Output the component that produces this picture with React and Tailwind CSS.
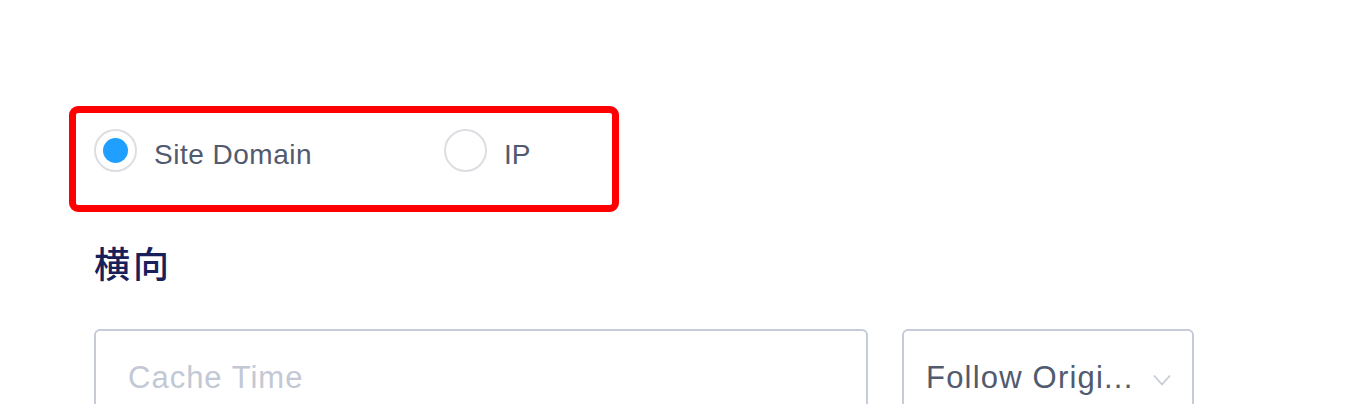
import React from "react";

export default function App() {
  return (
    <div
      className="w-[1364px] h-[404px] overflow-hidden bg-white pl-[69px] pt-[106px]"
      style={{ fontFamily: '"Liberation Sans", Arial, "Noto Sans CJK SC", sans-serif' }}
    >
      <div className="w-[550px] h-[106px] border-[7px] border-[#ff0000] rounded-[9px] flex items-start pl-[18px] pt-[16px]">
        <label className="flex items-center w-[350px]">
          <span className="w-[43px] h-[43px] rounded-full border-2 border-[#dcdee2] flex items-center justify-center">
            <span className="w-[25px] h-[25px] rounded-full bg-[#1f9fff]" />
          </span>
          <span className="ml-[17px] mt-[8px] text-[28px] leading-none text-[#515a6e] tracking-[0.5px]">Site Domain</span>
        </label>
        <label className="flex items-center">
          <span className="w-[43px] h-[43px] rounded-full border-2 border-[#dcdee2]" />
          <span className="ml-[17px] mt-[8px] text-[28px] leading-none text-[#515a6e]">IP</span>
        </label>
      </div>
      <div
        className="ml-[25px] mt-[32px] text-[36px] leading-none font-medium text-[#17205a] tracking-[3px]"
        style={{ fontFamily: '"Noto Sans CJK SC", sans-serif' }}
      >
        横向
      </div>
      <div className="ml-[25px] mt-[49px] flex gap-[34px]">
        <div className="w-[774px] h-[100px] border-2 border-[#c5cbd9] rounded-[6px] pl-[32px] pt-[31px]">
          <span className="text-[31px] leading-none text-[#c3c8d5] tracking-[1px]">Cache Time</span>
        </div>
        <div className="w-[292px] h-[100px] border-2 border-[#c5cbd9] rounded-[6px] pl-[22px] pt-[31px] flex items-start">
          <span className="text-[31px] leading-none text-[#515a6e] tracking-[1.2px]">Follow Origi...</span>
          <svg className="ml-[20px] mt-[12px]" width="18" height="12" viewBox="0 0 18 12" fill="none">
            <path d="M1 1.5 L9 10.5 L17 1.5" stroke="#c5cbd9" strokeWidth="1.8" />
          </svg>
        </div>
      </div>
    </div>
  );
}
